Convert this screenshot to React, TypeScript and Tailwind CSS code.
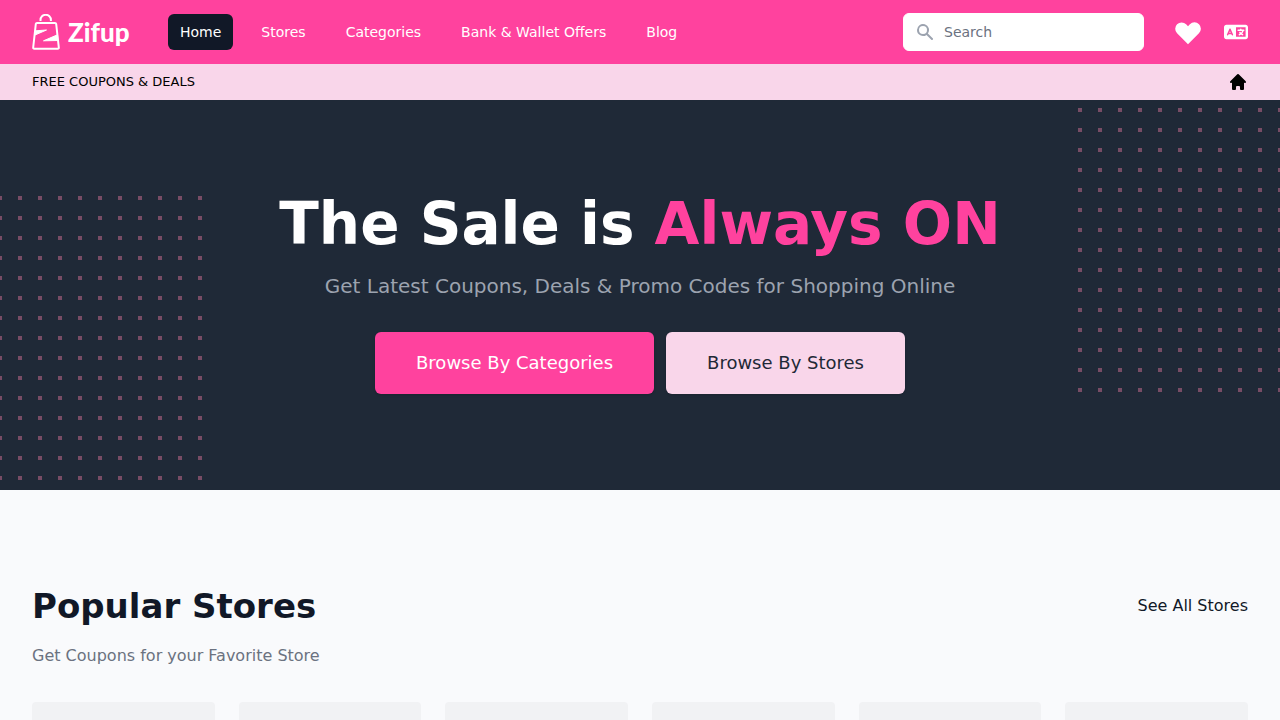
import { FunctionComponent } from "react";
import { FaLanguage } from "react-icons/fa6";
import { HiHeart, HiHome, HiSearch } from "react-icons/hi";

const navLinks = [
  { name: "Home", href: "#", current: true },
  { name: "Stores", href: "#stores", current: false },
  { name: "Categories", href: "#categories", current: false },
  { name: "Bank & Wallet Offers", href: "#offers", current: false },
  { name: "Blog", href: "#blog", current: false },
];

const Logo: FunctionComponent = () => (
  <a href="#" className="flex w-24 items-center gap-2 text-white">
    <svg
      className="h-9 w-7 shrink-0"
      viewBox="0 0 28 36"
      fill="none"
      stroke="currentColor"
      strokeWidth="2"
      strokeLinejoin="round"
      aria-hidden="true"
    >
      <path d="M8.500 7V6a5.200 5.200 0 0 1 10.400 0v1" />
      <path d="M5 9h18q1 0 1.200 1l2.600 23.500q.1 1.300-1.100 1.300H2.300q-1.200 0-1.100-1.300L3.800 10Q4 9 5 9z" />
      <path
        d="M3.500 16.800L14.500 16L3 21z"
        fill="currentColor"
        strokeWidth="1"
      />
      <path
        d="M25.500 20.800L11.500 26.800L26 26.500z"
        fill="currentColor"
        strokeWidth="1"
      />
    </svg>
    <span className="font-['Lato',sans-serif] text-[26px] leading-9 font-black">
      Zifup
    </span>
  </a>
);

interface DotsProps {
  id: string;
  offset: number;
  className: string;
}

const Dots: FunctionComponent<DotsProps> = ({ id, offset, className }) => (
  <svg className={className} aria-hidden="true">
    <defs>
      <pattern
        id={id}
        x={offset}
        y={0}
        width={20}
        height={20}
        patternUnits="userSpaceOnUse"
      >
        <rect width={4} height={4} fill="#774c65" />
      </pattern>
    </defs>
    <rect width="100%" height="100%" fill={`url(#${id})`} />
  </svg>
);

const Header: FunctionComponent = () => (
  <header>
    <div className="flex h-16 items-center justify-between bg-[#ff429e] px-8">
      <div className="flex items-center gap-10">
        <Logo />
        <nav className="flex gap-4">
          {navLinks.map((link) => (
            <a
              key={link.name}
              href={link.href}
              className={`rounded-md px-3 py-2 text-sm text-white ${
                link.current ? "bg-[#111827]" : ""
              }`}
            >
              {link.name}
            </a>
          ))}
        </nav>
      </div>
      <div className="flex items-center">
        <div className="relative">
          <HiSearch className="absolute left-3 top-[9px] size-5 text-[#9ca3af]" />
          <input
            type="search"
            aria-label="Search"
            placeholder="Search"
            className="w-[241px] rounded-md border border-white bg-white py-2 pl-10 pr-3 text-sm text-[#111827] placeholder:text-[#6b7280]"
          />
        </div>
        <a href="#saved" aria-label="Saved coupons" className="ml-7 text-white">
          <HiHeart className="size-8" />
        </a>
        <button
          type="button"
          aria-label="Change language"
          className="ml-5 text-white"
        >
          <FaLanguage className="size-6" />
        </button>
      </div>
    </div>
    <div className="flex h-9 items-center justify-between bg-[#f9d6ea] px-8 text-black">
      <p className="text-[13px]">FREE COUPONS &amp; DEALS</p>
      <a href="#" aria-label="Home page">
        <HiHome className="size-5" />
      </a>
    </div>
  </header>
);

const Hero: FunctionComponent = () => (
  <section className="relative overflow-hidden bg-[#1f2937] px-8 py-24 text-center">
    <Dots
      id="dots-left"
      offset={-2}
      className="absolute bottom-2.5 left-0 h-[284px] w-[202px]"
    />
    <Dots
      id="dots-right"
      offset={0}
      className="absolute right-0 top-2 h-[284px] w-[202px]"
    />
    <div className="relative">
      <h1 className="text-[58px] leading-14 font-bold text-white">
        The Sale is <span className="text-[#ff429e]">Always ON</span>
      </h1>
      <p className="mt-5 text-xl leading-7 text-[#9ca3af]">
        Get Latest Coupons, Deals &amp; Promo Codes for Shopping Online
      </p>
      <div className="mt-8 flex justify-center gap-3">
        <a
          href="#categories"
          className="rounded-md border border-transparent bg-[#ff429e] px-10 py-4 text-lg leading-7 text-white shadow-sm"
        >
          Browse By Categories
        </a>
        <a
          href="#stores"
          className="rounded-md border border-transparent bg-[#f9d6ea] px-10 py-4 text-lg leading-7 text-[#1f2937] shadow-sm"
        >
          Browse By Stores
        </a>
      </div>
    </div>
  </section>
);

const PopularStores: FunctionComponent = () => (
  <section id="stores" className="px-8 pt-24">
    <div className="flex items-center justify-between">
      <h2 className="text-[34px] leading-10 font-bold text-[#111827]">
        Popular Stores
      </h2>
      <a href="#stores" className="text-base text-[#111827]">
        See All Stores
      </a>
    </div>
    <p className="mt-4 text-base leading-7 text-[#6b7280]">
      Get Coupons for your Favorite Store
    </p>
    {/* placeholders until the stores are loaded */}
    <ul className="mt-8 grid grid-cols-6 gap-6">
      {[...Array(6)].map((_, index) => (
        <li key={index} className="h-40 rounded bg-[#f1f2f4]"></li>
      ))}
    </ul>
  </section>
);

const App: FunctionComponent = () => {
  return (
    <div className="min-h-screen bg-[#f9fafc] font-['DejaVu_Sans',Verdana,sans-serif]">
      <Header />
      <main>
        <Hero />
        <PopularStores />
      </main>
    </div>
  );
};

export default App;
